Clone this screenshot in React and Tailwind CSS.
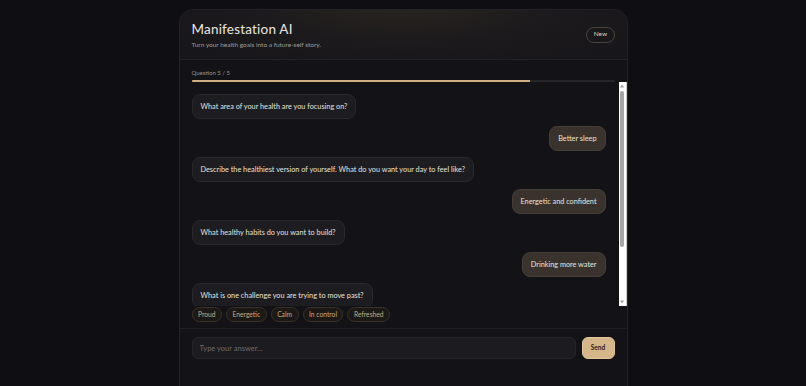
import { useState } from "react";

const messages = [
  { from: "ai", text: "What area of your health are you focusing on?" },
  { from: "me", text: "Better sleep" },
  { from: "ai", text: "Describe the healthiest version of yourself. What do you want your day to feel like?" },
  { from: "me", text: "Energetic and confident" },
  { from: "ai", text: "What healthy habits do you want to build?" },
  { from: "me", text: "Drinking more water" },
  { from: "ai", text: "What is one challenge you are trying to move past?" },
];

const chips = ["Proud", "Energetic", "Calm", "In control", "Refreshed"];

// classic scrollbar look from the reference
function Scrollbar() {
  return (
    <div className="w-[8px] shrink-0 bg-white border-r border-[#d0d0d0] flex flex-col items-center">
      <svg width="6" height="8" viewBox="0 0 6 8" className="shrink-0">
        <path d="M3 2.5 L5.2 5.5 L0.8 5.5 Z" fill="#a3a3a3" />
      </svg>
      <div className="mt-[1px] w-[4px] h-[156px] rounded-full bg-[#a6a6a6]" />
      <div className="flex-1" />
      <svg width="6" height="8" viewBox="0 0 6 8" className="shrink-0">
        <path d="M3 5.5 L5.2 2.5 L0.8 2.5 Z" fill="#a3a3a3" />
      </svg>
    </div>
  );
}

export default function App() {
  const [answer, setAnswer] = useState("");
  const progress = 80;

  return (
    <div
      className="h-[386px] overflow-hidden bg-[#0f0e13] flex justify-center pt-[9px]"
      style={{ fontFamily: "Lato, 'Open Sans', sans-serif" }}
    >
      <div className="w-[449px] h-[400px] shrink-0 rounded-[14px] border border-[#232227] bg-[#131217] flex flex-col overflow-hidden">
        {/* Header */}
        <div className="h-[50px] shrink-0 px-[12px] flex items-center justify-between border-b border-[#222126] bg-[radial-gradient(ellipse_at_50%_0%,#28241f_0%,#1c1a1c_45%,#161519_100%)]">
          <div>
            <h1 className="text-[13.5px] leading-[18px] text-[#ebe7e1] tracking-[0.2px]">Manifestation AI</h1>
            <p className="mt-[2px] text-[6.5px] leading-[9px] text-[#a19d98]">Turn your health goals into a future-self story.</p>
          </div>
          <button
            type="button"
            className="h-[16px] px-[6.5px] rounded-full border border-[#4a433b] text-[6.5px] text-[#d9cfbf] leading-none"
          >
            New
          </button>
        </div>

        {/* Progress */}
        <div className="shrink-0 px-[12px] pt-[9px]">
          <div className="text-[6px] leading-[8px] text-[#9a968f]">Question 5 / 5</div>
          <div className="mt-[3px] h-[2px] bg-[#26252a] rounded-full overflow-hidden">
            <div className="h-full bg-[#cdb083]" style={{ width: `${progress}%` }} />
          </div>
        </div>

        {/* Chat */}
        <div className="h-[224px] shrink-0 flex">
          <div className="flex-1 overflow-hidden pl-[12px] pr-[13px] pt-[12px] flex flex-col gap-[6.5px]">
            {messages.map((m, i) =>
              m.from === "ai" ? (
                <div
                  key={i}
                  className="self-start shrink-0 px-[8px] py-[6px] rounded-[8px] border border-[#29282d] bg-[#1d1c21] text-[7.3px] leading-[11px] text-[#e6e3de]"
                >
                  {m.text}
                </div>
              ) : (
                <div
                  key={i}
                  className="self-end shrink-0 px-[8px] py-[6px] rounded-[8px] border border-[#463d35] bg-[#3a332d] text-[7.3px] leading-[11px] text-[#ebe4da]"
                >
                  {m.text}
                </div>
              )
            )}
          </div>
          <Scrollbar />
        </div>

        {/* Quick replies */}
        <div className="shrink-0 px-[12px] pt-px pb-[6px] flex gap-[4px]">
          {chips.map((c) => (
            <button
              key={c}
              type="button"
              className="h-[15px] px-[5.5px] rounded-full border border-[#3a3229] bg-[#1b1815] text-[6.7px] leading-none text-[#c8ac84]"
            >
              {c}
            </button>
          ))}
        </div>

        {/* Input */}
        <div className="shrink-0 border-t border-[#1f1e23] px-[12px] pt-[8px] flex gap-[6px]">
          <input
            value={answer}
            onChange={(e) => setAnswer(e.target.value)}
            placeholder="Type your answer..."
            className="flex-1 h-[22px] rounded-[6px] border border-[#25242a] bg-[#1c1b20] px-[7px] text-[7.5px] text-[#e6e3de] placeholder:text-[#6c6b71] outline-none"
          />
          <button
            type="button"
            className="w-[33px] h-[22px] rounded-[6px] border border-[#e0c59b] bg-[#d5b68a] text-[6.5px] font-bold text-[#2a2118]"
          >
            Send
          </button>
        </div>
      </div>
    </div>
  );
}
